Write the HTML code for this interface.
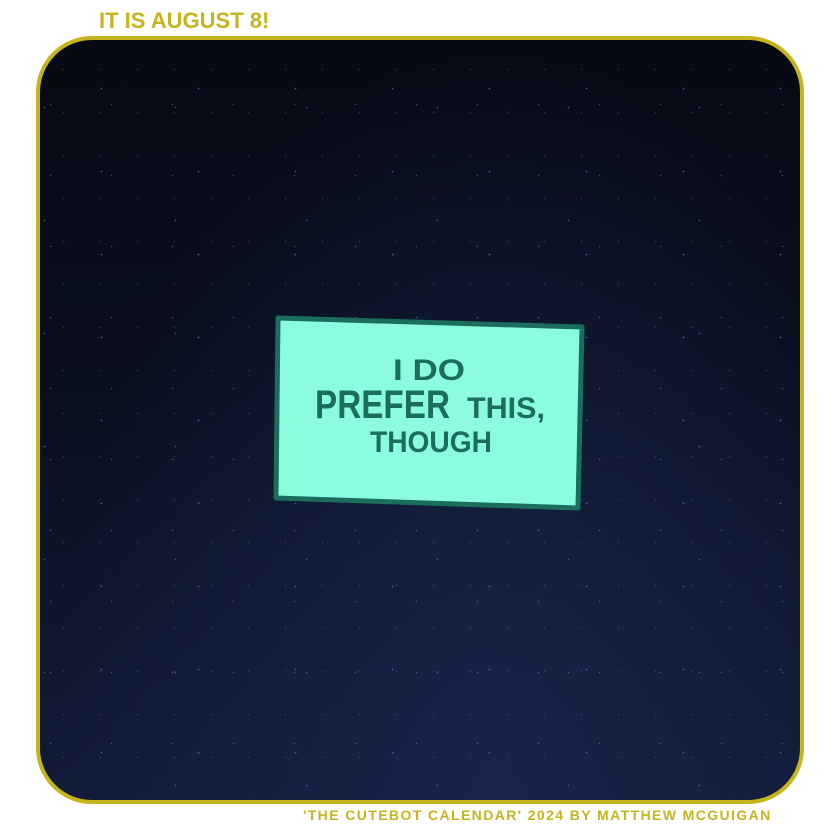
<!DOCTYPE html>
<html><head><meta charset="utf-8"><style>
html,body{margin:0;padding:0;background:#fff;width:840px;height:840px;overflow:hidden;position:relative;font-family:"Liberation Sans",sans-serif}
.title{position:absolute;left:99px;top:8px;font-size:22px;font-weight:bold;color:#c6b41c}
.box{position:absolute;left:36px;top:36px;width:760px;height:760px;border:4px solid #c6b41c;border-radius:56px;overflow:hidden;
background:
radial-gradient(circle,rgba(120,120,255,.6) 0.6px,transparent 1.2px) 13px 7px/97px 83px,
radial-gradient(circle,rgba(200,200,230,.35) 0.5px,transparent 1px) 41px 29px/61px 71px,
radial-gradient(circle,rgba(160,160,200,.25) 0.5px,transparent 1px) 5px 51px/37px 43px,
radial-gradient(circle,rgba(120,130,255,.5) 0.6px,transparent 1.2px) 70px 11px/131px 113px,
radial-gradient(ellipse at 60% 100%,#18244a 0%,rgba(20,30,60,0) 70%),
linear-gradient(#070a14 0%,#0a0f1e 45%,#121b38 100%);}
.foot{position:absolute;left:303px;top:807px;font-size:14px;font-weight:bold;color:#c6b41c;letter-spacing:1.4px;white-space:nowrap}
svg{position:absolute;left:0;top:0}
</style></head><body>
<div class="title">IT IS AUGUST 8!</div>
<div class="box"></div>
<svg width="840" height="840">
<polygon points="278,318 582,327 578,508 276,498" fill="#8cfce0" stroke="#1b6e5c" stroke-width="5" stroke-linejoin="round"/>
<g fill="#1b6e5c" font-family="Liberation Sans Narrow, Liberation Sans, sans-serif" font-weight="bold">
<text x="393" y="380" font-size="30" textLength="72" lengthAdjust="spacingAndGlyphs">I DO</text>
<text x="315" y="418" font-size="40" textLength="135" lengthAdjust="spacingAndGlyphs">PREFER</text>
<text x="467" y="418" font-size="30" textLength="78" lengthAdjust="spacingAndGlyphs">THIS,</text>
<text x="370" y="452" font-size="30" textLength="122" lengthAdjust="spacingAndGlyphs">THOUGH</text>
</g>
</svg>
<div class="foot">'THE CUTEBOT CALENDAR' 2024 BY MATTHEW MCGUIGAN</div>
</body></html>
